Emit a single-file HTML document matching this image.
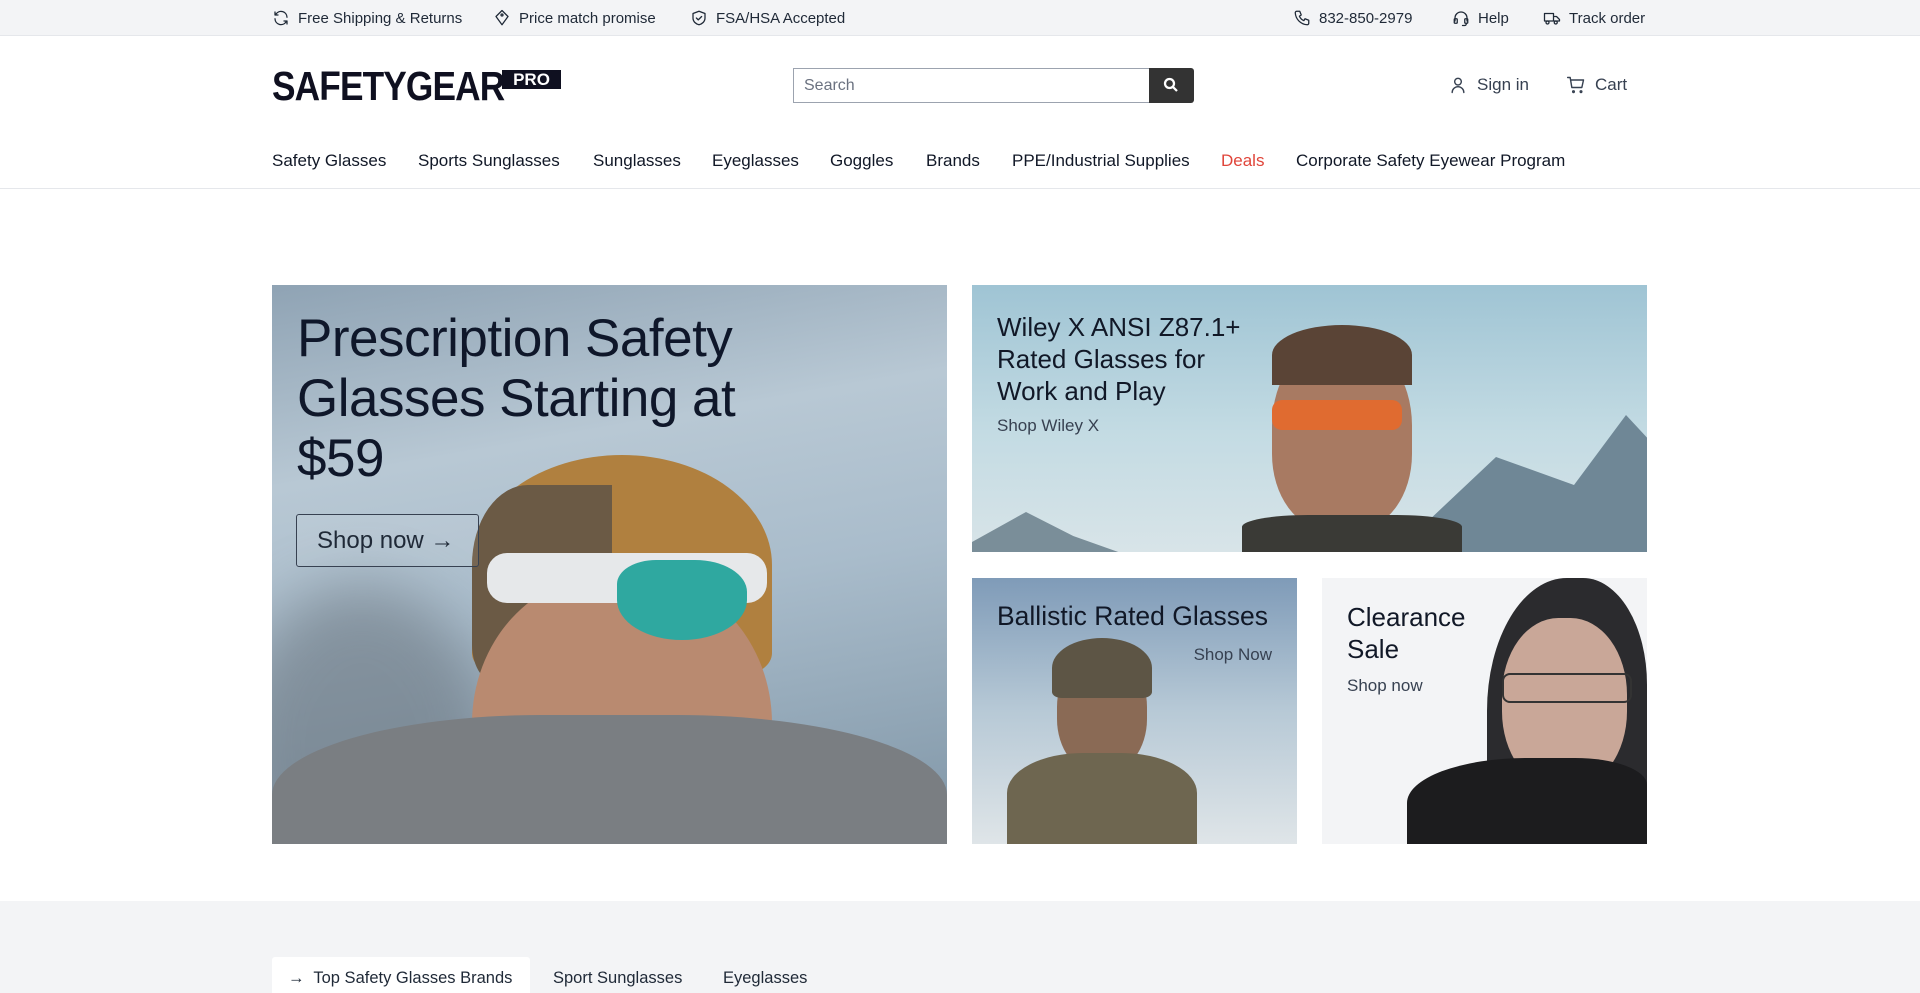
<!DOCTYPE html>
<html><head><meta charset="utf-8"><style>
*{box-sizing:border-box;margin:0;padding:0}
body{width:1920px;height:993px;overflow:hidden;font-family:"Liberation Sans",sans-serif;background:#fff;color:#111827;position:relative}
.top{position:absolute;left:0;top:0;width:1920px;height:36px;background:#f3f4f6;border-bottom:1px solid #e5e7eb;font-size:15px;color:#1f2937}
.ti{position:absolute;top:9px;display:flex;align-items:center;gap:8px}
.ti svg{width:18px;height:18px;fill:none;stroke:#1f2937;stroke-width:1.7;stroke-linecap:round;stroke-linejoin:round}
.logo{position:absolute;left:272px;top:63px;font-weight:900;font-size:41px;letter-spacing:-1px;color:#0f1020;transform:scaleX(.86);transform-origin:left;font-family:"Liberation Sans",sans-serif}
.pro{position:absolute;left:502px;top:70px;width:59px;height:19px;background:#0f1020;color:#fff;font-weight:900;font-size:17px;line-height:19px;text-align:center}
.search{position:absolute;left:793px;top:68px;width:356px;height:35px;border:1px solid #9ca3af;border-right:none;font-size:16px;color:#6b7280;padding:8px 10px}
.sbtn{position:absolute;left:1149px;top:68px;width:45px;height:35px;background:#333;border-radius:0 3px 3px 0}
.acct{position:absolute;top:75px;font-size:17px;color:#374151;display:flex;align-items:center;gap:9px}
.acct svg{width:20px;height:20px;fill:none;stroke:#374151;stroke-width:1.7;stroke-linecap:round;stroke-linejoin:round}
.nav span{position:absolute;top:151px;font-size:17px;color:#111827;white-space:nowrap}
.hr{position:absolute;top:188px;left:0;width:1920px;height:1px;background:#e5e7eb}
.card{position:absolute;overflow:hidden}
.gray{position:absolute;top:901px;left:0;width:1920px;height:92px;background:#f3f4f6}
.tab{position:absolute;top:957px;height:36px;font-size:16.5px;color:#1f2937;padding-top:12px}
</style></head><body>
<div class="top">
 <div class="ti" style="left:272px"><svg viewBox="0 0 24 24"><path d="M20 11a8 8 0 0 0-14.5-4.5L4 8M4 4v4h4M4 13a8 8 0 0 0 14.5 4.5L20 16M20 20v-4h-4"/></svg>Free Shipping &amp; Returns</div>
 <div class="ti" style="left:493px"><svg viewBox="0 0 24 24"><path d="M12 2l8 8-8 11-8-11z"/><circle cx="12" cy="8" r="1.3"/></svg>Price match promise</div>
 <div class="ti" style="left:690px"><svg viewBox="0 0 24 24"><path d="M12 3l8 3v6c0 5-4 8-8 9-4-1-8-4-8-9V6z"/><path d="M8.5 12l2.5 2.5 4.5-4.5"/></svg>FSA/HSA Accepted</div>
 <div class="ti" style="left:1293px"><svg viewBox="0 0 24 24"><path d="M5 3h4l2 5-2.5 1.5a11 11 0 0 0 6 6L16 13l5 2v4a2 2 0 0 1-2 2A17 17 0 0 1 3 5a2 2 0 0 1 2-2"/></svg>832-850-2979</div>
 <div class="ti" style="left:1452px"><svg viewBox="0 0 24 24"><path d="M4 16v-4a8 8 0 0 1 16 0v4"/><rect x="3" y="13" width="4" height="6" rx="1"/><rect x="17" y="13" width="4" height="6" rx="1"/><path d="M19 19v1a2 2 0 0 1-2 2h-3"/></svg>Help</div>
 <div class="ti" style="left:1543px"><svg viewBox="0 0 24 24"><path d="M2 6h12v10H2zM14 10h4l4 4v2h-8z"/><circle cx="6" cy="18" r="2"/><circle cx="17" cy="18" r="2"/></svg>Track order</div>
</div>
<div class="logo">SAFETYGEAR</div><div class="pro">PRO</div>
<div class="search">Search</div>
<div class="sbtn"><svg viewBox="0 0 24 24" width="18" height="18" style="position:absolute;left:13px;top:8px" fill="none" stroke="#fff" stroke-width="3"><circle cx="10" cy="10" r="6"/><path d="M15 15l5 5"/></svg></div>
<div class="acct" style="left:1448px"><svg viewBox="0 0 24 24"><circle cx="12" cy="8" r="4"/><path d="M5 21a7 7 0 0 1 14 0"/></svg>Sign in</div>
<div class="acct" style="left:1566px"><svg viewBox="0 0 24 24"><path d="M2 3h3l2 12h12l2-9H6"/><circle cx="9" cy="20" r="1"/><circle cx="18" cy="20" r="1"/></svg>Cart</div>
<div class="nav"><span style="left:272px">Safety Glasses</span><span style="left:418px">Sports Sunglasses</span><span style="left:593px">Sunglasses</span><span style="left:712px">Eyeglasses</span><span style="left:830px">Goggles</span><span style="left:926px">Brands</span><span style="left:1012px">PPE/Industrial Supplies</span><span style="left:1221px;color:#e0453a">Deals</span><span style="left:1296px">Corporate Safety Eyewear Program</span></div>
<div class="hr"></div>

<div class="card" style="left:272px;top:285px;width:675px;height:559px;background:linear-gradient(170deg,#8fa3b4 0%,#b8c8d4 30%,#a9bccb 55%,#7f95a6 100%)">
 <div style="position:absolute;left:-40px;top:300px;width:260px;height:320px;background:#6b7680;border-radius:50%;filter:blur(30px);opacity:.6"></div>
 <div style="position:absolute;left:200px;top:170px;width:300px;height:220px;background:#b0803f;border-radius:50% 50% 10% 10%;"></div>
 <div style="position:absolute;left:200px;top:200px;width:140px;height:200px;background:#6b5a45;border-radius:40% 0 0 20%"></div>
 <div style="position:absolute;left:200px;top:290px;width:300px;height:330px;background:#b98a70;border-radius:45% 45% 40% 40%"></div>
 <div style="position:absolute;left:215px;top:268px;width:280px;height:50px;background:#e6e8ea;border-radius:20px"></div>
 <div style="position:absolute;left:345px;top:275px;width:130px;height:80px;background:#2fa8a0;border-radius:30% 40% 50% 50%"></div>
 <div style="position:absolute;left:0;top:430px;width:675px;height:200px;background:#7a7e82;border-radius:40% 40% 0 0"></div>
 <div style="position:absolute;left:25px;top:24px;font-size:53px;line-height:60px;color:#0f172a;width:520px;letter-spacing:-0.5px">Prescription Safety Glasses Starting at $59</div>
 <div style="position:absolute;left:24px;top:229px;width:183px;height:53px;border:1.5px solid #374151;border-radius:3px;font-size:24px;color:#1f2937;padding:12px 20px;background:rgba(255,255,255,.08)">Shop now →</div>
</div>

<div class="card" style="left:972px;top:285px;width:675px;height:267px;background:linear-gradient(180deg,#9fc4d4 0%,#c3dbe3 55%,#d8e4e8 100%)">
 <div style="position:absolute;left:0;top:215px;width:675px;height:60px;background:#7a8e99;clip-path:polygon(0 70%,8% 20%,15% 60%,25% 100%,0 100%)"></div>
 <div style="position:absolute;left:420px;top:130px;width:260px;height:140px;background:#6f8796;clip-path:polygon(0 100%,40% 30%,70% 50%,90% 0,100% 20%,100% 100%)"></div>
 <div style="position:absolute;left:300px;top:55px;width:140px;height:190px;background:#a87a62;border-radius:45% 45% 40% 40%"></div>
 <div style="position:absolute;left:300px;top:40px;width:140px;height:60px;background:#5a4436;border-radius:50% 50% 0 0"></div>
 <div style="position:absolute;left:300px;top:115px;width:130px;height:30px;background:#e06b30;border-radius:10px"></div>
 <div style="position:absolute;left:270px;top:230px;width:220px;height:40px;background:#3a3a36;border-radius:30% 30% 0 0"></div>
 <div style="position:absolute;left:25px;top:26px;font-size:26px;line-height:32px;color:#111827;width:270px">Wiley X ANSI Z87.1+ Rated Glasses for Work and Play</div>
 <div style="position:absolute;left:25px;top:131px;font-size:17px;color:#374151">Shop Wiley X</div>
</div>

<div class="card" style="left:972px;top:578px;width:325px;height:266px;background:linear-gradient(180deg,#7f9bb8 0%,#b7c9d6 50%,#dfe5e8 100%)">
 <div style="position:absolute;left:85px;top:75px;width:90px;height:120px;background:#8a6a55;border-radius:45%"></div>
 <div style="position:absolute;left:80px;top:60px;width:100px;height:60px;background:#5d5545;border-radius:50% 50% 10% 10%"></div>
 <div style="position:absolute;left:35px;top:175px;width:190px;height:100px;background:#6e6650;border-radius:40% 40% 0 0"></div>
 <div style="position:absolute;left:25px;top:23px;font-size:26.5px;color:#111827">Ballistic Rated Glasses</div>
 <div style="position:absolute;right:25px;top:67px;font-size:17px;color:#374151">Shop Now</div>
</div>

<div class="card" style="left:1322px;top:578px;width:325px;height:266px;background:#f3f4f6">
 <div style="position:absolute;left:165px;top:0;width:160px;height:266px;background:#2b2b2e;border-radius:50% 40% 0 0"></div>
 <div style="position:absolute;left:180px;top:40px;width:125px;height:170px;background:#c9a798;border-radius:45%"></div>
 <div style="position:absolute;left:180px;top:95px;width:130px;height:30px;border:2px solid #333;border-radius:8px"></div>
 <div style="position:absolute;left:85px;top:180px;width:240px;height:90px;background:#1c1c1e;border-radius:50% 30% 0 0"></div>
 <div style="position:absolute;left:25px;top:23px;font-size:26px;line-height:32px;color:#111827">Clearance<br>Sale</div>
 <div style="position:absolute;left:25px;top:98px;font-size:17px;color:#374151">Shop now</div>
</div>

<div class="gray"></div>
<div class="tab" style="left:272px;width:258px;background:#fff;border-radius:3px 3px 0 0;padding-left:16px">→&nbsp; Top Safety Glasses Brands</div>
<div class="tab" style="left:553px">Sport Sunglasses</div>
<div class="tab" style="left:723px">Eyeglasses</div>
</body></html>
